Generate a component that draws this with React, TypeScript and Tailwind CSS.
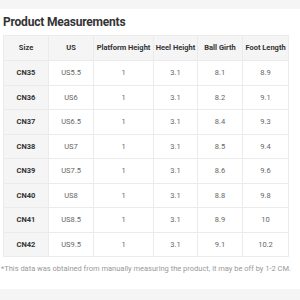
const headers = ["Size", "US", "Platform Height", "Heel Height", "Ball Girth", "Foot Length"];

const rows = [
  ["CN35", "US5.5", "1", "3.1", "8.1", "8.9"],
  ["CN36", "US6", "1", "3.1", "8.2", "9.1"],
  ["CN37", "US6.5", "1", "3.1", "8.4", "9.3"],
  ["CN38", "US7", "1", "3.1", "8.5", "9.4"],
  ["CN39", "US7.5", "1", "3.1", "8.6", "9.6"],
  ["CN40", "US8", "1", "3.1", "8.8", "9.8"],
  ["CN41", "US8.5", "1", "3.1", "8.9", "10"],
  ["CN42", "US9.5", "1", "3.1", "9.1", "10.2"],
];

const widths = ["w-[45px]", "w-[45px]", "w-[60px]", "w-[44px]", "w-[45px]", "w-[46px]"];

export default function App() {
  return (
    <div className="w-[300px] h-[300px] bg-white flex flex-col font-['Roboto',sans-serif] overflow-hidden">
      <div className="h-[9px] shrink-0 bg-[#f5f5f5]" />
      <div className="h-[280px] shrink-0 flex flex-col px-[3px]">
        <h1 className="text-[12px] font-bold text-[#333] leading-none mt-[7px] h-[12px] tracking-[-0.2px] whitespace-nowrap">
          Product Measurements
        </h1>
        <table className="mt-[7px] border-collapse table-fixed w-[285px] text-[7.5px]">
          <colgroup>
            {widths.map((w, i) => (
              <col key={i} className={w} />
            ))}
          </colgroup>
          <thead>
            <tr className="h-[25px] bg-[#f5f5f5]">
              {headers.map((h) => (
                <th key={h} className="border border-[#ebebeb] font-bold text-[#333] text-center p-0 whitespace-nowrap">
                  {h}
                </th>
              ))}
            </tr>
          </thead>
          <tbody>
            {rows.map((r) => (
              <tr key={r[0]} className="h-[24.5px]">
                {r.map((c, i) => (
                  <td
                    key={i}
                    className={
                      i === 0
                        ? "border border-[#ebebeb] bg-[#f5f5f5] font-bold text-[#333] text-center p-0"
                        : "border border-[#ebebeb] text-[#666] text-center p-0"
                    }
                  >
                    {c}
                  </td>
                ))}
              </tr>
            ))}
          </tbody>
        </table>
        <p className="mt-[6px] text-[7.5px] leading-[12px] text-[#999] whitespace-nowrap -ml-[2px]">
          *This data was obtained from manually measuring the product, it may be off by 1-2 CM.
        </p>
      </div>
      <div className="flex-1 bg-[#f5f5f5]" />
    </div>
  );
}
